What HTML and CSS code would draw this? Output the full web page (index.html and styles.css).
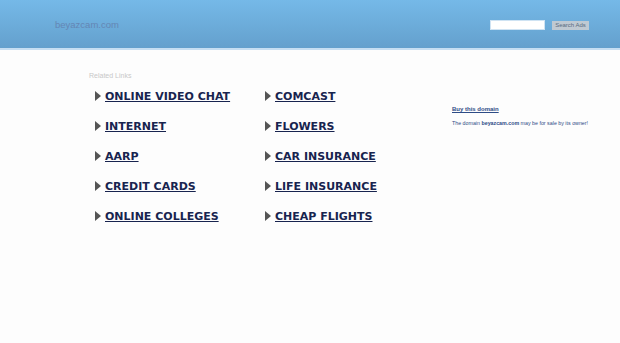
FILE: index.html
```html
<!DOCTYPE html>
<html lang="en">
  <head>
    <meta charset="UTF-8" />
    <title>beyazcam.com</title>
    <link rel="stylesheet" href="styles.css">
  </head>
  <body>
    <div class="header">
      <div class="logo">beyazcam.com</div>
      <form class="search">
        <input type="text" class="search-input" />
        <button type="button" class="search-btn">Search Ads</button>
      </form>
    </div>
    <div class="main">
      <div class="links">
        <div class="links-title">Related Links</div>
        <div class="links-grid">
          <a href="#" class="link"><span class="arrow"></span>ONLINE VIDEO CHAT</a>
          <a href="#" class="link"><span class="arrow"></span>COMCAST</a>
          <a href="#" class="link"><span class="arrow"></span>INTERNET</a>
          <a href="#" class="link"><span class="arrow"></span>FLOWERS</a>
          <a href="#" class="link"><span class="arrow"></span>AARP</a>
          <a href="#" class="link"><span class="arrow"></span>CAR INSURANCE</a>
          <a href="#" class="link"><span class="arrow"></span>CREDIT CARDS</a>
          <a href="#" class="link"><span class="arrow"></span>LIFE INSURANCE</a>
          <a href="#" class="link"><span class="arrow"></span>ONLINE COLLEGES</a>
          <a href="#" class="link"><span class="arrow"></span>CHEAP FLIGHTS</a>
        </div>
      </div>
      <div class="sidebar">
        <a href="#" class="buy">Buy this domain</a>
        <p class="sale">The domain <b>beyazcam.com</b> may be for sale by its owner!</p>
      </div>
    </div>
  </body>
</html>
```

FILE: styles.css
```css
body {
  margin: 0;
  font-family: "Liberation Sans", Arial, sans-serif;
  background-color: #fdfdfd;
}

.header {
  height: 48px;
  background: linear-gradient(#75b9e8, #64a0cd);
  border-bottom: 2px solid #c6def2;
  display: flex;
  align-items: center;
  padding: 0 31px 0 55px;
}

.logo {
  flex: 1;
  font-size: 9.5px;
  color: #6486b4;
}

.search {
  display: flex;
  align-items: center;
  gap: 7px;
  margin: 2px 0 0 0;
}

.search-input {
  width: 53px;
  height: 8px;
  padding: 0;
  border: 1px solid #cfe3f3;
  background-color: #fff;
  box-sizing: content-box;
}

.search-btn {
  width: 37px;
  height: 9px;
  padding: 0;
  border: none;
  background-color: #bfc9d2;
  color: #5a6b80;
  font-family: "Liberation Sans", Arial, sans-serif;
  font-size: 6px;
  line-height: 9px;
}

.main {
  display: flex;
  padding-top: 22px;
}

.links {
  width: 363px;
  padding-left: 89px;
}

.links-title {
  font-size: 7px;
  color: #c8c8c8;
  height: 14px;
}

.links-grid {
  display: grid;
  grid-template-columns: 170px 170px;
  grid-auto-rows: 30px;
  padding-left: 6px;
}

.link {
  display: flex;
  align-items: center;
  height: 20px;
  font-family: "DejaVu Sans", Verdana, sans-serif;
  font-weight: bold;
  font-size: 11px;
  color: #18244f;
  text-decoration: underline;
  text-decoration-thickness: 1px;
}

.arrow {
  width: 0;
  height: 0;
  border-top: 5px solid transparent;
  border-bottom: 5px solid transparent;
  border-left: 6px solid #555;
  margin-right: 4px;
}

.sidebar {
  padding-top: 34px;
}

.buy {
  display: block;
  font-size: 6px;
  font-weight: bold;
  color: #2e4c86;
  text-decoration: underline;
}

.sale {
  margin: 8px 0 0;
  font-size: 5.3px;
  color: #2e4c86;
}

.sale b {
  font-weight: bold;
}
```
